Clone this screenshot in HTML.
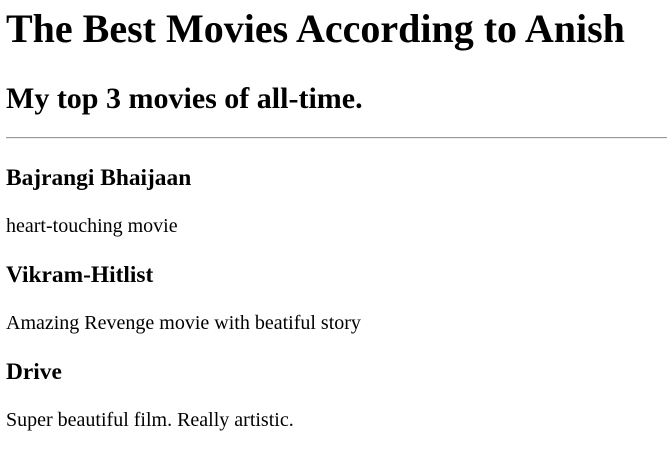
<!DOCTYPE html>
<html>
<head>
<meta charset="utf-8">
<style>
body{font-family:"Liberation Serif",serif;margin:0;color:#000;background:#fff;position:relative;width:667px;height:450px;overflow:hidden;}
.a{position:absolute;left:6px;margin:0;line-height:1.15;white-space:nowrap;}
h1.a{font-size:40px;top:6px;}
h2.a{font-size:30px;top:82px;}
h3.a{font-size:23.4px;}
p.a{font-size:20px;}
.hr{position:absolute;left:6px;right:0;top:137px;height:0;border-top:1px solid #9a9a9a;border-bottom:1px solid #eee;}
</style>
</head>
<body>
<h1 class="a">The Best Movies According to Anish</h1>
<h2 class="a">My top 3 movies of all-time.</h2>
<div class="hr"></div>
<h3 class="a" style="top:165px">Bajrangi Bhaijaan</h3>
<p class="a" style="top:215px">heart-touching movie</p>
<h3 class="a" style="top:262px">Vikram-Hitlist</h3>
<p class="a" style="top:312px">Amazing Revenge movie with beatiful story</p>
<h3 class="a" style="top:359px">Drive</h3>
<p class="a" style="top:409px">Super beautiful film. Really artistic.</p>
</body>
</html>
